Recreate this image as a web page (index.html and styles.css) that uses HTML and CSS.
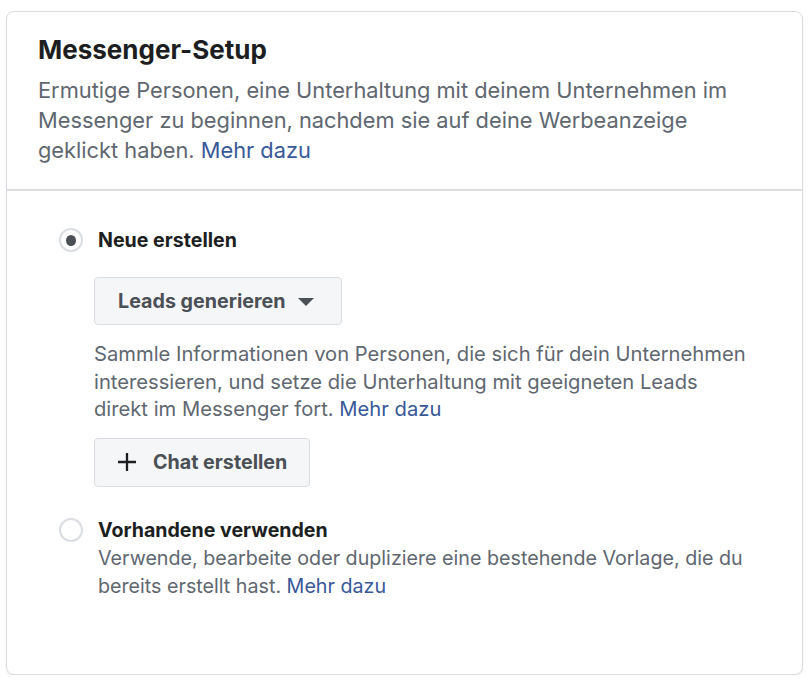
FILE: index.html
```html
<!DOCTYPE html>
<html lang="de">
<head>
<meta charset="utf-8">
<link rel="stylesheet" href="styles.css">
</head>
<body>
<div class="card">
  <div class="card-header">
    <h2 class="title">Messenger-Setup</h2>
    <p class="intro">Ermutige Personen, eine Unterhaltung mit deinem Unternehmen im Messenger zu beginnen, nachdem sie auf deine Werbeanzeige geklickt haben. <a class="link" href="#">Mehr dazu</a></p>
  </div>
  <div class="card-body">
    <div class="option">
      <span class="radio radio-checked"><span class="dot"></span></span>
      <div class="option-content">
        <div class="option-label">Neue erstellen</div>
        <button class="btn btn-dropdown">Leads generieren <span class="caret"></span></button>
        <p class="desc desc-first">Sammle Informationen von Personen, die sich für dein Unternehmen interessieren, und setze die Unterhaltung mit geeigneten Leads direkt im Messenger fort. <a class="link" href="#">Mehr dazu</a></p>
        <button class="btn btn-chat"><svg class="plus" width="20" height="20" viewBox="0 0 20 20"><path d="M10 1v18M1 10h18" stroke="#1c1e21" stroke-width="2.3" fill="none"/></svg>Chat erstellen</button>
      </div>
    </div>
    <div class="option option-second">
      <span class="radio"></span>
      <div class="option-content">
        <div class="option-label">Vorhandene verwenden</div>
        <p class="desc desc-tight">Verwende, bearbeite oder dupliziere eine bestehende Vorlage, die du bereits erstellt hast. <a class="link" href="#">Mehr dazu</a></p>
      </div>
    </div>
  </div>
</div>
</body>
</html>
```
FILE: styles.css
```css
* { box-sizing: border-box; }
html, body { margin: 0; padding: 0; background: #fff; }
body {
  font-family: Inter, Roboto, "Liberation Sans", Arial, sans-serif;
  color: #1c1e21;
  padding: 11px 9px 0 6px;
}
.card {
  width: 797px;
  height: 664px;
  border: 1px solid #dadde1;
  border-radius: 8px;
  box-shadow: 0 1px 2px rgba(0,0,0,0.08);
  background: #fff;
}
.card-header {
  padding: 22px 31px 24px 31px;
  border-bottom: 2px solid #dddfe2;
}
.title {
  margin: 0;
  font-size: 26px;
  line-height: 32px;
  font-weight: 700;
  color: #1c1e21;
}
.intro {
  margin: 9px 0 0;
  max-width: 720px;
  font-size: 21.8px;
  line-height: 30px;
  color: #606770;
}
.link { color: #385898; text-decoration: none; }
.card-body {
  padding: 35px 20px 0 52px;
}
.option {
  display: flex;
  align-items: flex-start;
}
.radio {
  flex: none;
  width: 24px;
  height: 24px;
  border: 2px solid #dadde1;
  border-radius: 50%;
  margin-top: 2px;
  display: flex;
  align-items: center;
  justify-content: center;
}
.dot {
  width: 10px;
  height: 11px;
  border-radius: 50%;
  background: #4b4f56;
}
.option-content {
  margin-left: 15px;
}
.option-label {
  font-size: 19.6px;
  line-height: 28px;
  font-weight: 700;
  color: #1c1e21;
}
.btn {
  display: flex;
  align-items: center;
  border: 1px solid #dadde1;
  background: #f5f6f7;
  border-radius: 4px;
  font-family: inherit;
  font-size: 19.7px;
  font-weight: 700;
  color: #4b4f56;
  cursor: pointer;
}
.btn-dropdown {
  margin: 23px 0 0 -4px;
  width: 248px;
  height: 48px;
  padding: 0 0 0 23px;
}
.caret {
  display: inline-block;
  width: 0;
  height: 0;
  border-left: 8px solid transparent;
  border-right: 8px solid transparent;
  border-top: 8px solid #4b4f56;
  margin-left: 13px;
  margin-top: 1px;
}
.desc {
  margin: 15px 0 0 -4px;
  max-width: 680px;
  font-size: 20px;
  line-height: 27.5px;
  color: #606770;
}
.desc-first {
  max-width: 656px;
  font-size: 20.2px;
}
.btn-chat {
  margin: 15px 0 0 -4px;
  width: 216px;
  height: 49px;
  padding: 0 0 0 22px;
}
.plus { margin-right: 16px; }
.option-second {
  margin-top: 29px;
}
.desc-tight {
  margin: 0;
  font-size: 19.7px;
  line-height: 28px;
}
```
